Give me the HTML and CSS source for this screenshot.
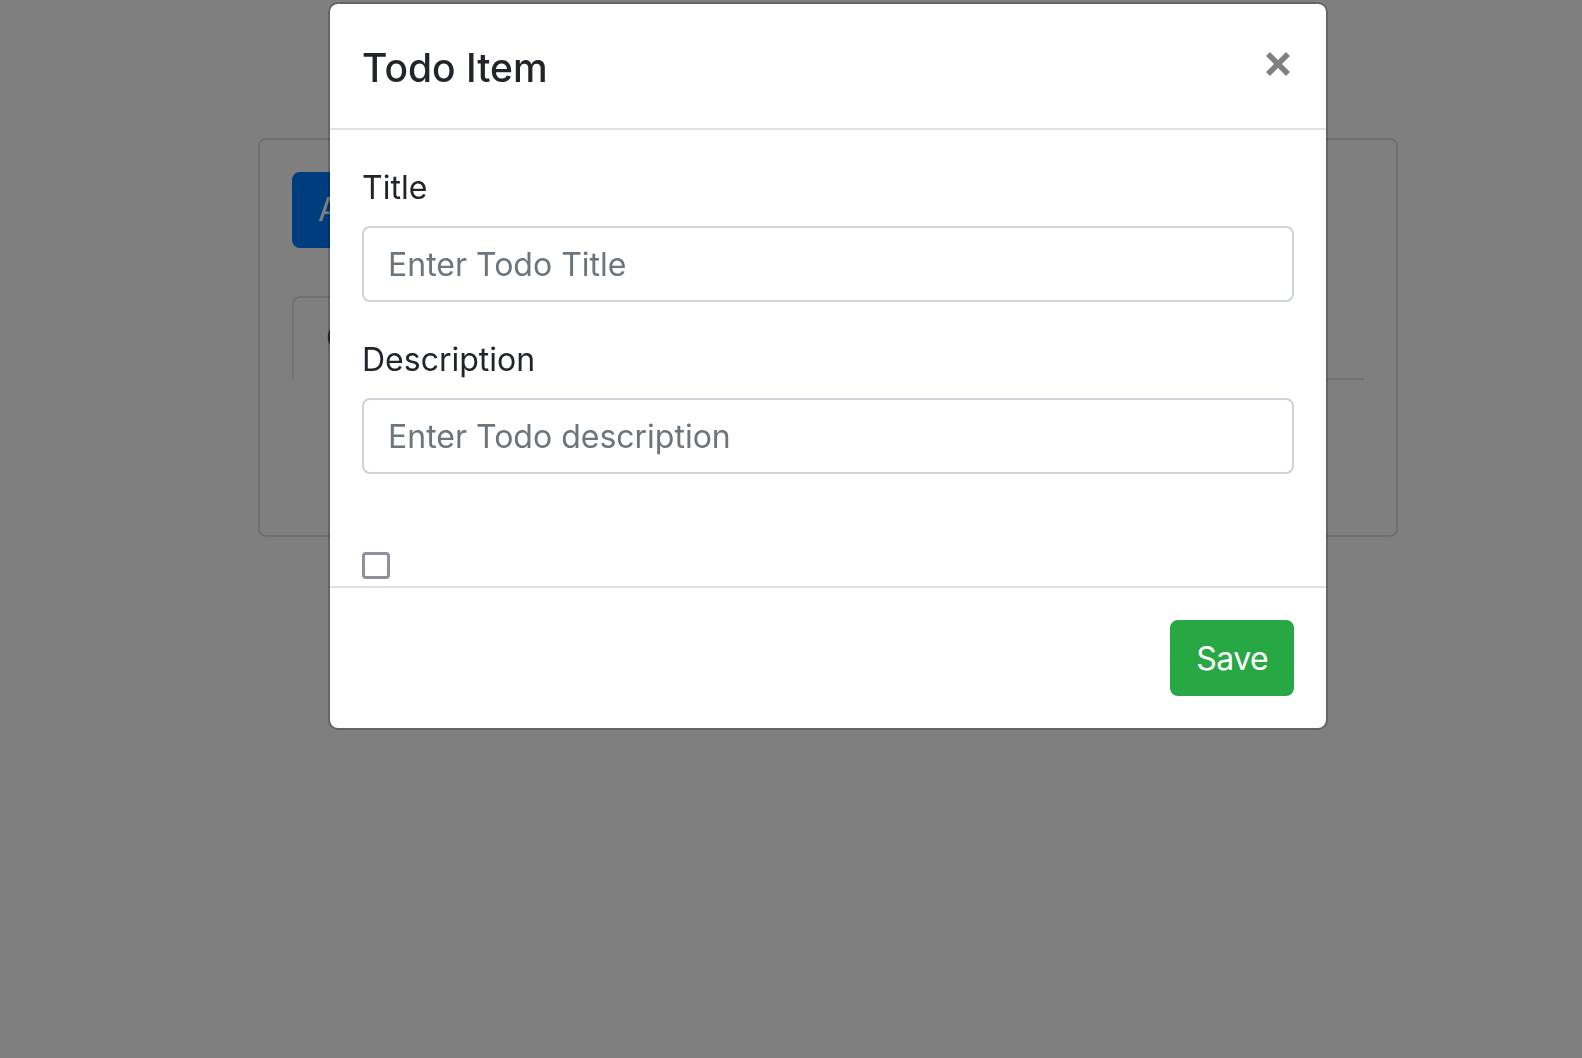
FILE: index.html
```html
<!DOCTYPE html>
<html lang="en">
<head>
<meta charset="utf-8">
<title>Todo</title>
<link rel="stylesheet" href="styles.css">
</head>
<body>
<div class="page">
  <div class="card">
    <button class="btn btn-primary">Add task</button>
    <div class="tabs">
      <div class="tab active">Completed</div>
      <div class="tab">Incomplete</div>
    </div>
  </div>
</div>
<div class="backdrop"></div>
<div class="modal">
  <div class="modal-header">
    <h5 class="modal-title">Todo Item</h5>
    <button class="close" aria-label="Close">
      <svg width="24" height="24" viewBox="0 0 24 24"><path d="M2 2 L22 22 M22 2 L2 22" stroke="#808080" stroke-width="5.5" fill="none"/></svg>
    </button>
  </div>
  <div class="modal-body">
    <div class="form-group">
      <label class="label">Title</label>
      <input class="input" type="text" placeholder="Enter Todo Title">
    </div>
    <div class="form-group">
      <label class="label">Description</label>
      <input class="input" type="text" placeholder="Enter Todo description">
    </div>
    <div class="check-row">
      <input class="check" type="checkbox">
    </div>
  </div>
  <div class="modal-footer">
    <button class="btn btn-success">Save</button>
  </div>
</div>
</body>
</html>
```
FILE: styles.css
```css
html, body {
  margin: 0;
  padding: 0;
  background: #fff;
  font-family: Inter, "Liberation Sans", sans-serif;
  color: #212529;
  height: 100%;
  overflow: hidden;
}
.page {
  padding: 138px 0 0 258px;
}
.card {
  box-sizing: border-box;
  width: 1140px;
  height: 399px;
  border: 2px solid rgba(0,0,0,.125);
  border-radius: 8px;
  padding: 32px;
}
.btn {
  font-family: inherit;
  font-size: 32px;
  line-height: 48px;
  padding: 12px 24px;
  border-radius: 8px;
  border: 2px solid transparent;
  color: #fff;
  display: inline-block;
}
.btn-primary {
  background: #007bff;
  border-color: #007bff;
}
.btn-success {
  background: #28a745;
  border-color: #28a745;
  margin: 8px;
  padding: 13px 24px 11px;
  letter-spacing: -0.6px;
}
.tabs {
  margin-top: 48px;
  display: flex;
  border-bottom: 2px solid #dee2e6;
}
.tab {
  font-size: 32px;
  line-height: 48px;
  padding: 16px 32px;
  border: 2px solid transparent;
  border-radius: 8px 8px 0 0;
  margin-bottom: -2px;
}
.tab.active {
  border-color: #dee2e6 #dee2e6 #fff;
  color: #495057;
}
.backdrop {
  position: fixed;
  inset: 0;
  background: rgba(0,0,0,.5);
}
.modal {
  position: absolute;
  top: 2px;
  left: 328px;
  width: 1000px;
  box-sizing: border-box;
  background: #fff;
  background-clip: padding-box;
  border: 2px solid rgba(0,0,0,.2);
  border-radius: 10px;
}
.modal-header {
  display: flex;
  justify-content: space-between;
  align-items: flex-start;
  padding: 32px;
  border-bottom: 2px solid #dee2e6;
}
.modal-title {
  margin: 0;
  font-size: 39px;
  line-height: 56px;
  padding-top: 4px;
  font-weight: 500;
}
.close {
  background: none;
  border: 0;
  padding: 0;
  margin: 16px 4px 0 0;
  width: 24px;
  height: 24px;
  display: flex;
}
.modal-body {
  padding: 32px 32px 7px;
}
.form-group {
  margin-bottom: 32px;
}
.label {
  display: block;
  font-size: 32px;
  line-height: 45px;
  padding-top: 3px;
  margin-bottom: 16px;
}
.input {
  display: block;
  box-sizing: border-box;
  width: 100%;
  height: 76px;
  padding: 12px 24px;
  font-family: inherit;
  font-size: 32px;
  line-height: 48px;
  color: #495057;
  border: 2px solid #ced4da;
  border-radius: 8px;
  outline: none;
}
.input::placeholder {
  color: #6c757d;
}
.check-row {
  padding-top: 46px;
  height: 27px;
}
.check {
  appearance: none;
  -webkit-appearance: none;
  margin: 0;
  display: block;
  box-sizing: border-box;
  width: 28px;
  height: 27px;
  border: 3px solid #8f8f9d;
  border-radius: 4px;
  background: #fff;
}
.modal-footer {
  display: flex;
  justify-content: flex-end;
  padding: 24px;
  border-top: 2px solid #dee2e6;
}
```
